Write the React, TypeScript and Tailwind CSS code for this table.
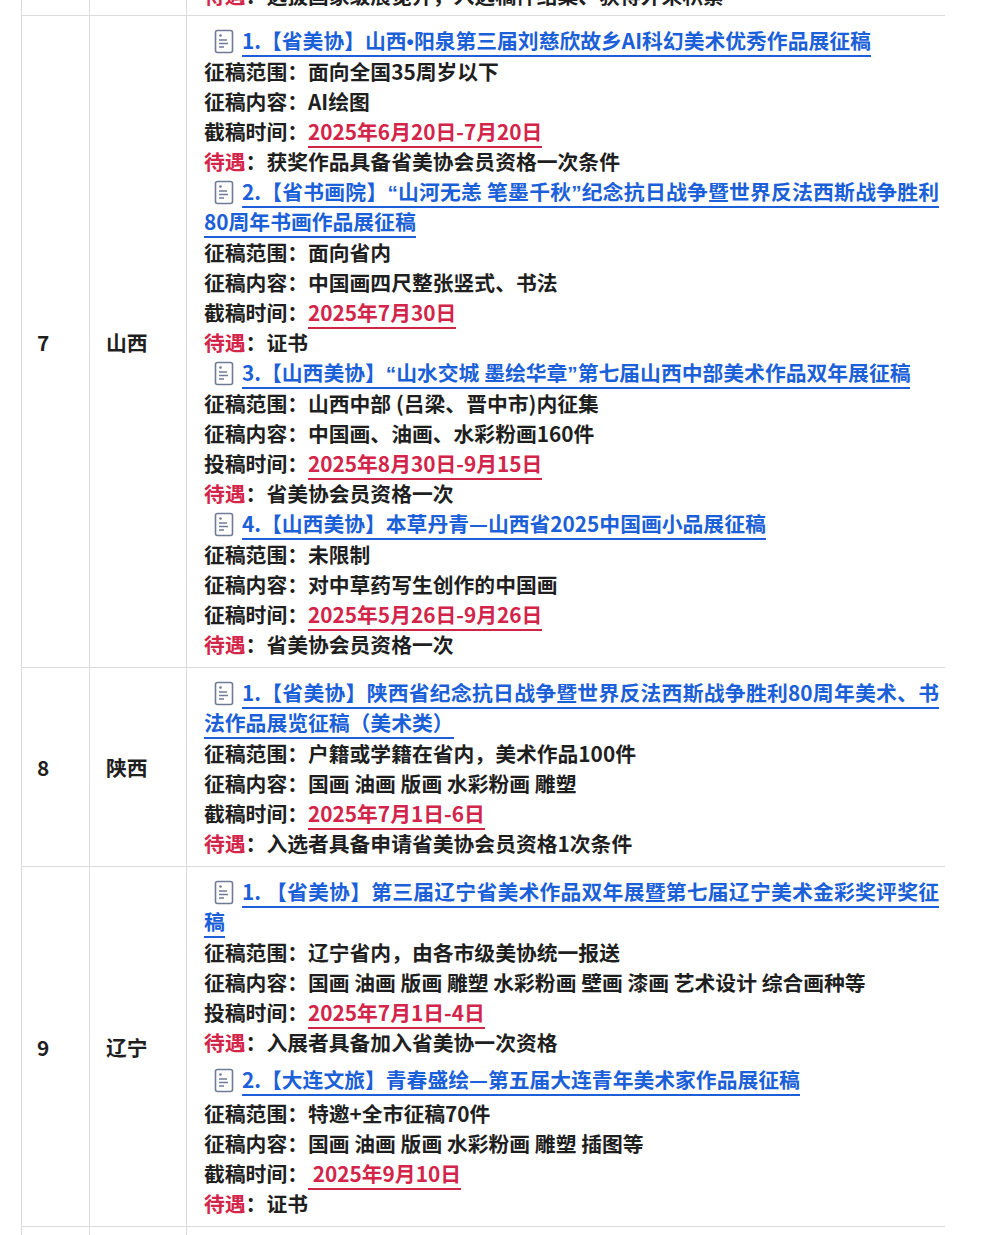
import React from "react";

type Item = {
  title: string;
  fields: [string, string][];
  date: [string, string];
  reward: string;
  gap?: boolean;
};

type Row = { no: string; prov: string; items: Item[] };

const rows: Row[] = [
  {
    no: "7",
    prov: "山西",
    items: [
      {
        title: "1.【省美协】山西•阳泉第三届刘慈欣故乡AI科幻美术优秀作品展征稿",
        fields: [
          ["征稿范围", "面向全国35周岁以下"],
          ["征稿内容", "AI绘图"],
        ],
        date: ["截稿时间", "2025年6月20日-7月20日"],
        reward: "获奖作品具备省美协会员资格一次条件",
      },
      {
        title: "2.【省书画院】“山河无恙 笔墨千秋”纪念抗日战争暨世界反法西斯战争胜利80周年书画作品展征稿",
        fields: [
          ["征稿范围", "面向省内"],
          ["征稿内容", "中国画四尺整张竖式、书法"],
        ],
        date: ["截稿时间", "2025年7月30日"],
        reward: "证书",
      },
      {
        title: "3.【山西美协】“山水交城 墨绘华章”第七届山西中部美术作品双年展征稿",
        fields: [
          ["征稿范围", "山西中部 (吕梁、晋中市)内征集"],
          ["征稿内容", "中国画、油画、水彩粉画160件"],
        ],
        date: ["投稿时间", "2025年8月30日-9月15日"],
        reward: "省美协会员资格一次",
      },
      {
        title: "4.【山西美协】本草丹青—山西省2025中国画小品展征稿",
        fields: [
          ["征稿范围", "未限制"],
          ["征稿内容", "对中草药写生创作的中国画"],
        ],
        date: ["征稿时间", "2025年5月26日-9月26日"],
        reward: "省美协会员资格一次",
      },
    ],
  },
  {
    no: "8",
    prov: "陕西",
    items: [
      {
        title: "1.【省美协】陕西省纪念抗日战争暨世界反法西斯战争胜利80周年美术、书法作品展览征稿（美术类）",
        fields: [
          ["征稿范围", "户籍或学籍在省内，美术作品100件"],
          ["征稿内容", "国画 油画 版画 水彩粉画 雕塑"],
        ],
        date: ["截稿时间", "2025年7月1日-6日"],
        reward: "入选者具备申请省美协会员资格1次条件",
      },
    ],
  },
  {
    no: "9",
    prov: "辽宁",
    items: [
      {
        title: "1. 【省美协】第三届辽宁省美术作品双年展暨第七届辽宁美术金彩奖评奖征稿",
        fields: [
          ["征稿范围", "辽宁省内，由各市级美协统一报送"],
          ["征稿内容", "国画 油画 版画 雕塑 水彩粉画 壁画 漆画 艺术设计 综合画种等"],
        ],
        date: ["投稿时间", "2025年7月1日-4日"],
        reward: "入展者具备加入省美协一次资格",
      },
      {
        title: "2.【大连文旅】青春盛绘—第五届大连青年美术家作品展征稿",
        fields: [
          ["征稿范围", "特邀+全市征稿70件"],
          ["征稿内容", "国画 油画 版画 水彩粉画 雕塑 插图等"],
        ],
        date: ["截稿时间", " 2025年9月10日"],
        reward: "证书",
        gap: true,
      },
    ],
  },
];

// quotes and the middle dot are narrow in the screenshot, not full-width
function Narrow({ text }: { text: string }) {
  const parts = text.split(/([“”•])/);
  return (
    <>
      {parts.map((p, i) =>
        /^[“”•]$/.test(p) ? (
          <span key={i} className="leading-[0]" style={{ fontFamily: '"Liberation Sans", sans-serif' }}>
            {p}
          </span>
        ) : (
          <React.Fragment key={i}>{p}</React.Fragment>
        ),
      )}
    </>
  );
}

function DocIcon() {
  return (
    <svg
      width="20"
      height="25"
      viewBox="0 0 20 25"
      className="ml-[10px] mr-[8px] inline-block align-[-5px]"
    >
      <rect x="1.5" y="1.5" width="17" height="22" rx="2" fill="#fff" stroke="#6f7b96" strokeWidth="1.6" />
      <circle cx="6.5" cy="6.5" r="1.3" fill="#6f7b96" />
      <line x1="5" y1="11" x2="13" y2="11" stroke="#6f7b96" strokeWidth="1.5" />
      <line x1="5" y1="14.5" x2="14" y2="14.5" stroke="#6f7b96" strokeWidth="1.5" />
      <line x1="5" y1="18" x2="10" y2="18" stroke="#6f7b96" strokeWidth="1.5" />
    </svg>
  );
}

function Entry({ item }: { item: Item }) {
  return (
    <div className={item.gap ? "mt-[7px]" : ""}>
      <p className={`text-justify ${item.gap ? "pb-[4px]" : "pb-[1px]"}`}>
        <DocIcon />
        <span className="border-b-2 border-[#1d5fd8] text-[#1b5fd9]">
          <Narrow text={item.title} />
        </span>
      </p>
      {item.fields.map(([label, value]) => (
        <p key={label}>
          {label}：{value}
        </p>
      ))}
      <p>
        {item.date[0]}：<span className="border-b-2 border-[#cf2547] text-[#d32449]">{item.date[1]}</span>
      </p>
      <p>
        <span className="text-[#d32449]">待遇</span>：{item.reward}
      </p>
    </div>
  );
}

export default function App() {
  return (
    <div
      className="h-[1235px] w-[989px] overflow-hidden bg-white text-[20.8px] font-bold leading-[30px] text-[#1f1f1f]"
      style={{ fontFamily: '"Noto Sans CJK SC", "Noto Sans", sans-serif' }}
    >
      <div className="-mt-[20px] ml-[21px] w-[924px]">
        {/* tail of the previous row */}
        <div className="flex border-b border-[#dcdcdc]">
          <div className="w-[68px] shrink-0 border-l border-[#dcdcdc]" />
          <div className="w-[97px] shrink-0 border-l border-[#dcdcdc]" />
          <div className="flex-1 border-l border-[#dcdcdc] pb-[5px] pl-[17px]">
            <span className="text-[#d32449]">待遇</span>：选拔国家级展览并，入选稿件结集、获得外来积累
          </div>
        </div>

        {rows.map((row) => (
          <div key={row.no} className="flex border-b border-[#dcdcdc]">
            <div className="flex w-[68px] shrink-0 items-center border-l border-[#dcdcdc] pl-[15px]">
              {row.no}
            </div>
            <div className="flex w-[97px] shrink-0 items-center border-l border-[#dcdcdc] pl-[16px]">
              {row.prov}
            </div>
            <div className="min-w-0 flex-1 border-l border-[#dcdcdc] pb-[8px] pl-[17px] pr-[6px] pt-[9px]">
              {row.items.map((item) => (
                <Entry key={item.title} item={item} />
              ))}
            </div>
          </div>
        ))}

        <div className="flex h-[40px]">
          <div className="w-[68px] shrink-0 border-l border-[#dcdcdc]" />
          <div className="w-[97px] shrink-0 border-l border-[#dcdcdc]" />
          <div className="flex-1 border-l border-[#dcdcdc]" />
        </div>
      </div>
    </div>
  );
}
